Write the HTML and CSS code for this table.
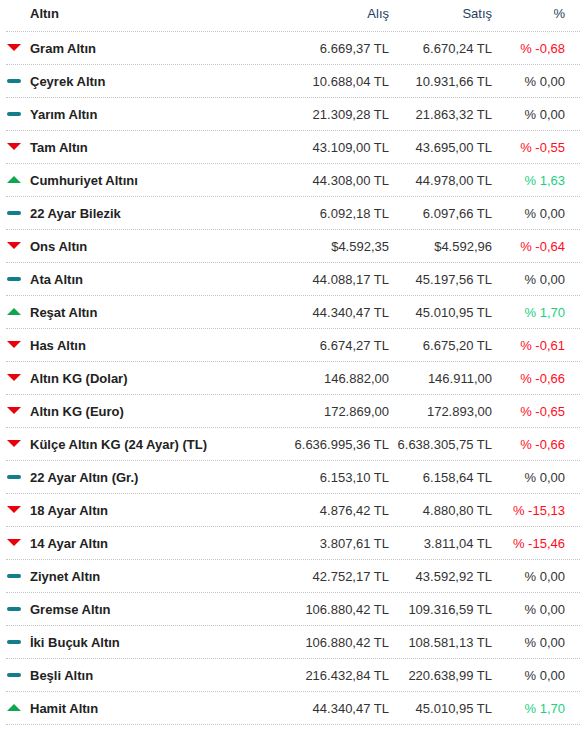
FILE: index.html
```html
<!DOCTYPE html>
<html lang="tr">

<head>
    <meta charset="UTF-8">
    <meta name="viewport" content="width=device-width, initial-scale=1.0">
    <title>Altın Fiyatları</title>
    <link rel="stylesheet" href="styles.css">
</head>

<body>
    <div class="gold_table">
        <div class="row head">
            <div class="name">Altın</div>
            <div class="num">Alış</div>
            <div class="num">Satış</div>
            <div class="num">%</div>
        </div>
        <div id="goldRows">
            <!-- Rows are injected here -->
        </div>
    </div>

    <script>
        const golds = [
            ['down', 'Gram Altın', '6.669,37 TL', '6.670,24 TL', '% -0,68'],
            ['flat', 'Çeyrek Altın', '10.688,04 TL', '10.931,66 TL', '% 0,00'],
            ['flat', 'Yarım Altın', '21.309,28 TL', '21.863,32 TL', '% 0,00'],
            ['down', 'Tam Altın', '43.109,00 TL', '43.695,00 TL', '% -0,55'],
            ['up', 'Cumhuriyet Altını', '44.308,00 TL', '44.978,00 TL', '% 1,63'],
            ['flat', '22 Ayar Bilezik', '6.092,18 TL', '6.097,66 TL', '% 0,00'],
            ['down', 'Ons Altın', '$4.592,35', '$4.592,96', '% -0,64'],
            ['flat', 'Ata Altın', '44.088,17 TL', '45.197,56 TL', '% 0,00'],
            ['up', 'Reşat Altın', '44.340,47 TL', '45.010,95 TL', '% 1,70'],
            ['down', 'Has Altın', '6.674,27 TL', '6.675,20 TL', '% -0,61'],
            ['down', 'Altın KG (Dolar)', '146.882,00', '146.911,00', '% -0,66'],
            ['down', 'Altın KG (Euro)', '172.869,00', '172.893,00', '% -0,65'],
            ['down', 'Külçe Altın KG (24 Ayar) (TL)', '6.636.995,36 TL', '6.638.305,75 TL', '% -0,66'],
            ['flat', '22 Ayar Altın (Gr.)', '6.153,10 TL', '6.158,64 TL', '% 0,00'],
            ['down', '18 Ayar Altın', '4.876,42 TL', '4.880,80 TL', '% -15,13'],
            ['down', '14 Ayar Altın', '3.807,61 TL', '3.811,04 TL', '% -15,46'],
            ['flat', 'Ziynet Altın', '42.752,17 TL', '43.592,92 TL', '% 0,00'],
            ['flat', 'Gremse Altın', '106.880,42 TL', '109.316,59 TL', '% 0,00'],
            ['flat', 'İki Buçuk Altın', '106.880,42 TL', '108.581,13 TL', '% 0,00'],
            ['flat', 'Beşli Altın', '216.432,84 TL', '220.638,99 TL', '% 0,00'],
            ['up', 'Hamit Altın', '44.340,47 TL', '45.010,95 TL', '% 1,70']
        ];

        const goldRows = document.getElementById('goldRows');
        golds.forEach(g => {
            goldRows.innerHTML += `
                <div class="row">
                    <div class="name"><span class="trend ${g[0]}"></span>${g[1]}</div>
                    <div class="num">${g[2]}</div>
                    <div class="num">${g[3]}</div>
                    <div class="num pct ${g[0]}">${g[4]}</div>
                </div>
            `;
        });
    </script>
</body>

</html>
```

FILE: styles.css
```css
body {
    font-family: "Liberation Sans", Arial, sans-serif;
    font-size: 13px;
    color: #333;
    background-color: #fff;
    margin: 0;
    padding: 0;
}

.gold_table {
    width: 574px;
    margin-left: 6px;
}

.row {
    display: grid;
    grid-template-columns: 1fr 110px 103px 73px;
    padding-right: 15px;
    height: 32px;
    align-items: center;
    border-bottom: 1px dotted #c4c4c4;
}

.row.head {
    height: 31px;
    align-items: start;
    color: #1f3d5f;
}

.row.head .name {
    padding-left: 24px;
    padding-top: 6px;
    font-weight: bold;
}

.row.head .num {
    padding-top: 6px;
}

.name {
    display: flex;
    align-items: center;
    font-weight: bold;
    color: #222;
    white-space: nowrap;
}

.num {
    text-align: right;
    white-space: nowrap;
}

.trend {
    display: inline-block;
    width: 14px;
    margin-left: 1px;
    margin-right: 9px;
}

.trend.down {
    height: 0;
    border-left: 7px solid transparent;
    border-right: 7px solid transparent;
    border-top: 7px solid #e8000b;
    width: 0;
    margin-top: -1px;
}

.trend.up {
    height: 0;
    border-left: 7px solid transparent;
    border-right: 7px solid transparent;
    border-bottom: 7px solid #11a552;
    width: 0;
    margin-top: -1px;
}

.trend.flat {
    height: 4px;
    background-color: #127d8b;
    border-radius: 2px;
}

.pct.down {
    color: #ff0d1d;
}

.pct.up {
    color: #1ccf7f;
}
```
